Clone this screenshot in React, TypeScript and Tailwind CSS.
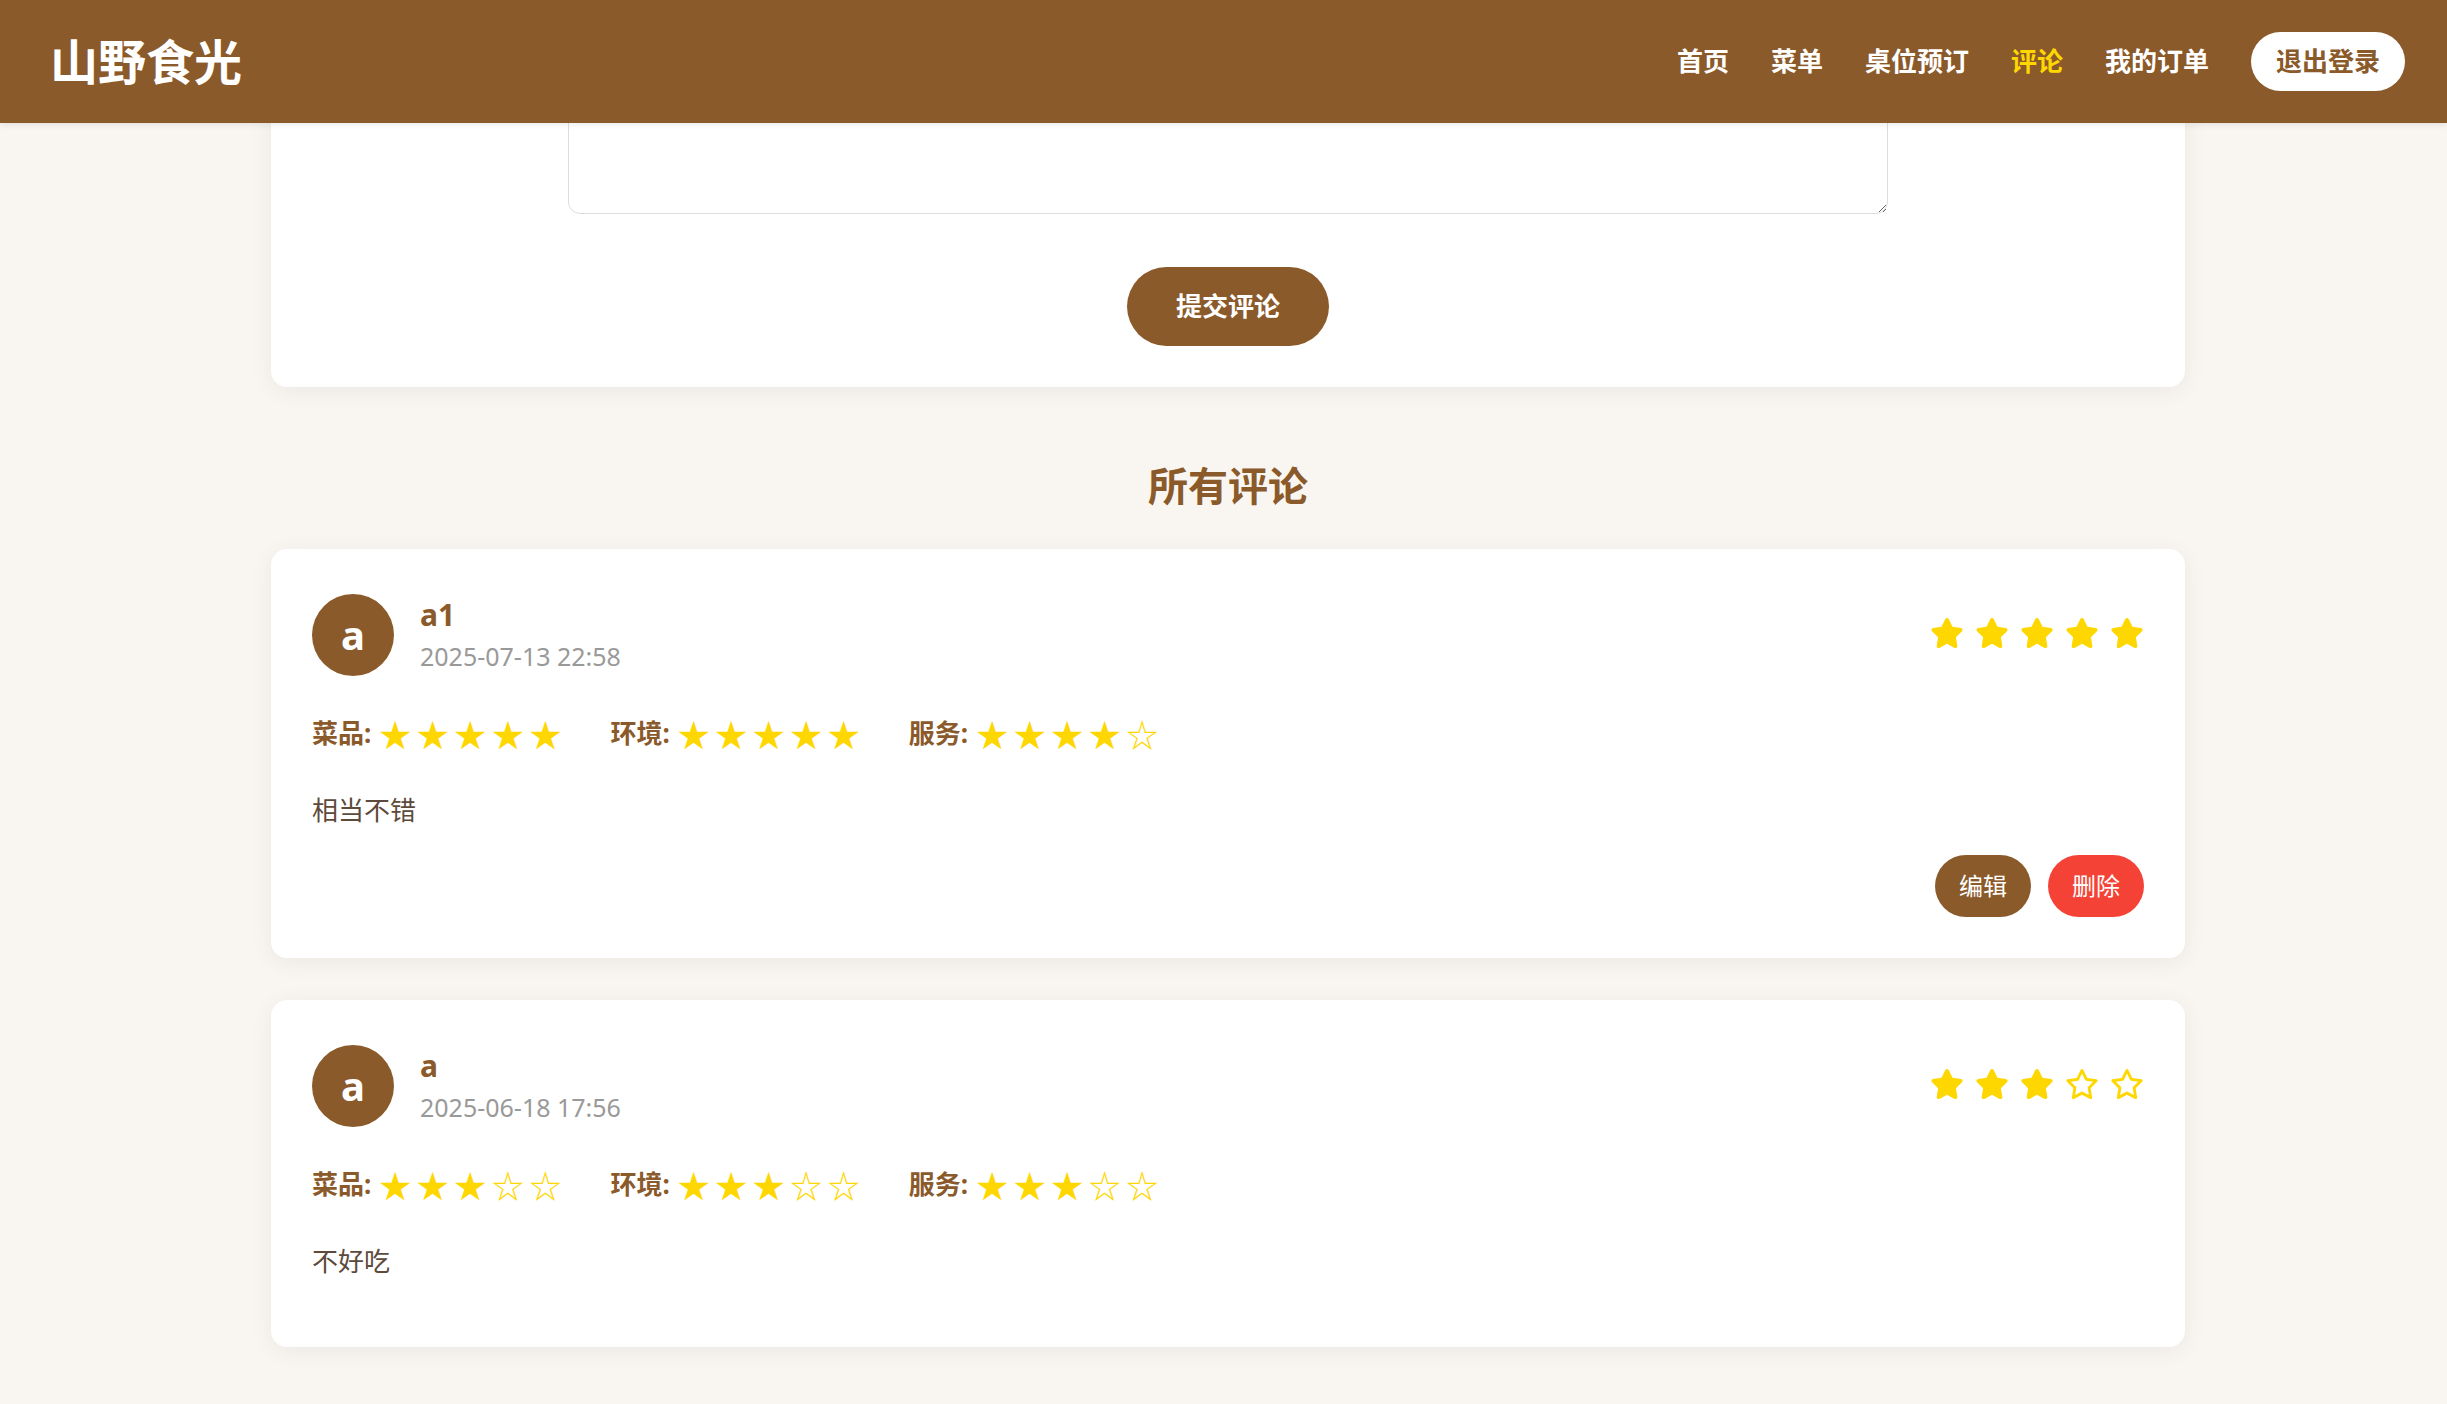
import React from "react";
import { FaStar, FaRegStar } from "react-icons/fa6";

const font = { fontFamily: '"Noto Sans", "Noto Sans CJK SC", sans-serif' };

type Review = {
  name: string;
  date: string;
  overall: number;
  food: number;
  env: number;
  service: number;
  text: string;
  mine: boolean;
};

const reviews: Review[] = [
  { name: "a1", date: "2025-07-13 22:58", overall: 5, food: 5, env: 5, service: 4, text: "相当不错", mine: true },
  { name: "a", date: "2025-06-18 17:56", overall: 3, food: 3, env: 3, service: 3, text: "不好吃", mine: false },
];

const SmallStars: React.FC<{ value: number }> = ({ value }) => (
  <div className="flex items-center gap-[5.5px] text-[#FFD700] text-[32px] leading-none" style={{ fontFamily: '"Noto Sans CJK SC", sans-serif' }}>
    {[1, 2, 3, 4, 5].map((i) => (
      <span key={i}>{i <= value ? "★" : "☆"}</span>
    ))}
  </div>
);

const RatingItem: React.FC<{ label: string; value: number }> = ({ label, value }) => (
  <div className="flex items-center gap-[8px]">
    <span className="text-[26px] font-bold text-[#8B5A2B]">{label}:</span>
    <SmallStars value={value} />
  </div>
);

const ReviewCard: React.FC<{ r: Review }> = ({ r }) => (
  <div className="bg-white rounded-[16px] shadow-[0_4px_24px_rgba(0,0,0,0.06)] p-[41px]">
    <div className="flex justify-between items-center h-[90px]">
      <div className="flex items-center gap-[26px]">
        <div className="w-[82px] h-[82px] rounded-full bg-[#8B5A2B] flex items-center justify-center text-white text-[40px] font-bold">
          {r.name.charAt(0)}
        </div>
        <div className="flex flex-col">
          <span className="text-[30px] font-bold text-[#8B5A2B] leading-[1.3]">{r.name}</span>
          <span className="mt-[4px] text-[25px] text-[#999] leading-[1.5]">{r.date}</span>
        </div>
      </div>
      <div className="flex items-center gap-[11px] text-[#FFD700] text-[34px] -mt-[4px]">
        {[1, 2, 3, 4, 5].map((i) => (i <= r.overall ? <FaStar key={i} /> : <FaRegStar key={i} />))}
      </div>
    </div>
    <div className="flex items-center gap-[49px] mt-[33px] h-[40px]">
      <RatingItem label="菜品" value={r.food} />
      <RatingItem label="环境" value={r.env} />
      <RatingItem label="服务" value={r.service} />
    </div>
    <p className="mt-[36px] mb-[24px] text-[26px] leading-[42px] text-[#5D4A3A]">{r.text}</p>
    {r.mine && (
      <div className="flex justify-end gap-[17px]">
        <button className="h-[62px] px-[24px] rounded-full bg-[#8B5A2B] text-white text-[24px]">编辑</button>
        <button className="h-[62px] px-[24px] rounded-full bg-[#F44336] text-white text-[24px]">删除</button>
      </div>
    )}
  </div>
);

export default function App() {
  return (
    <div className="min-h-screen bg-[#F9F6F1]" style={font}>
      <header className="sticky top-0 relative z-10 h-[123px] bg-[#8B5A2B] flex items-center justify-between pl-[50px] pr-[42px] shadow-[0_2px_6px_rgba(0,0,0,0.08)]">
        <div className="text-white text-[48px] font-bold">山野食光</div>
        <nav className="flex items-center gap-[42px] text-[26px] font-bold text-white">
          <a>首页</a>
          <a>菜单</a>
          <a>桌位预订</a>
          <a className="text-[#FFD700]">评论</a>
          <a>我的订单</a>
          <button className="h-[59px] px-[25px] rounded-full bg-white text-[#8B5A2B] font-bold">退出登录</button>
        </nav>
      </header>

      <main className="flex justify-center pl-[9px] pb-[60px]">
        <div className="w-[1914px] flex flex-col">
          <div className="-mt-[110px] bg-white rounded-[16px] shadow-[0_4px_24px_rgba(0,0,0,0.06)] p-[41px] flex flex-col items-center">
            <textarea className="w-[1320px] h-[160px] border border-[#ddd] rounded-[12px] p-[16px] text-[24px]" />
            <button className="mt-[53px] h-[79px] px-[49px] rounded-full bg-[#8B5A2B] text-white text-[26px] font-bold">提交评论</button>
          </div>

          <h2 className="mt-[75px] mb-[39px] text-center text-[40px] leading-[48px] font-bold text-[#8B5A2B]">所有评论</h2>

          <div className="flex flex-col gap-[42px]">
            {reviews.map((r, i) => (
              <ReviewCard key={i} r={r} />
            ))}
          </div>
        </div>
      </main>
    </div>
  );
}
